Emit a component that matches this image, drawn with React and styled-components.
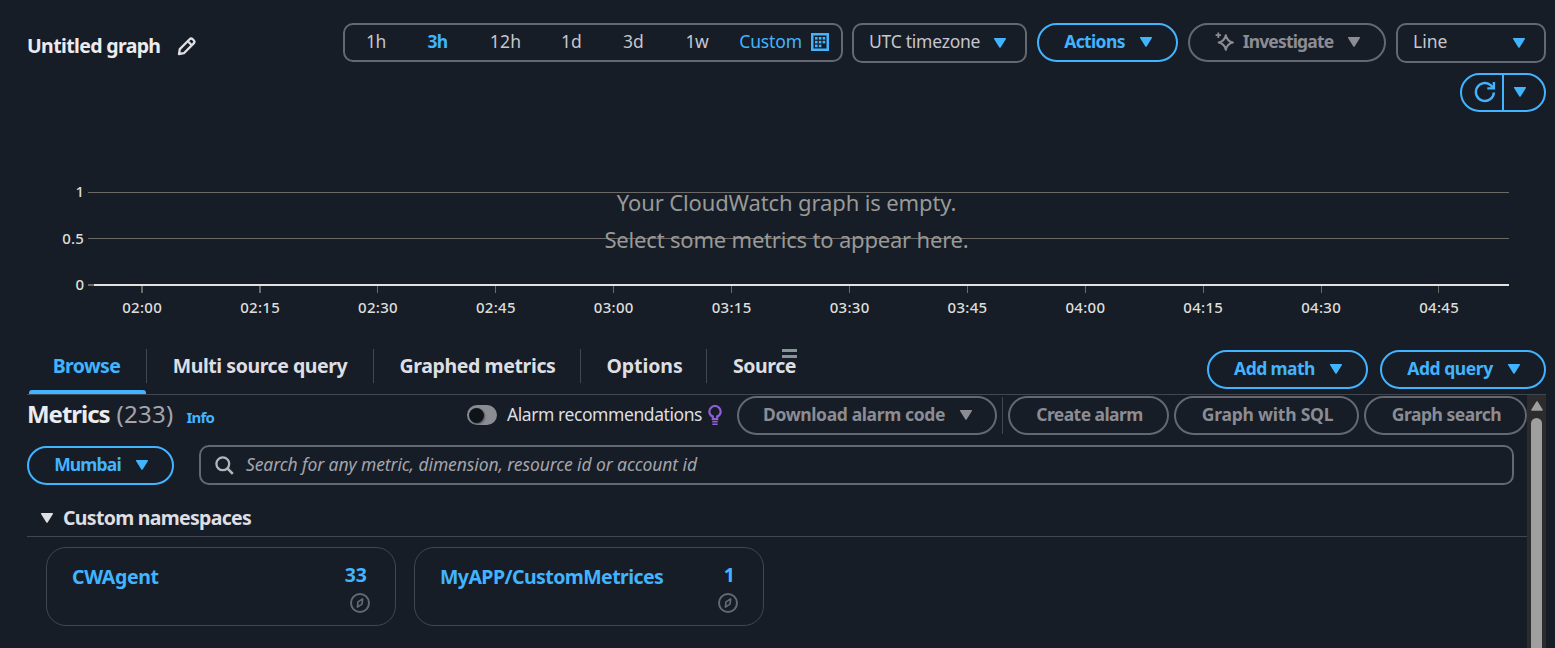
import React from 'react';
import styled, { createGlobalStyle } from 'styled-components';

const c = {
  bg: '#161d26',
  blue: '#42b4ff',
  line: '#656871',
  divider: '#424650',
  disabled: '#8c8c94',
  text: '#c6c6cd',
  heading: '#ebebf0',
  tab: '#dedee3',
};

const GlobalStyle = createGlobalStyle`
  * { box-sizing: border-box; }
  body { margin: 0; background: ${c.bg}; overflow: hidden; }
  button { font: inherit; background: none; border: 0; padding: 0; margin: 0; }
`;

const Page = styled.div`
  height: 648px;
  display: flex;
  flex-direction: column;
  overflow: hidden;
  background: ${c.bg};
  color: ${c.text};
  font-family: 'Noto Sans', 'Open Sans', sans-serif;
  font-size: 17.5px;
  line-height: 24px;
  white-space: nowrap;
`;

const Label = styled.span`
  display: block;
  letter-spacing: ${(p) => p.$ls || 0}px;
`;

/* Header */
const Header = styled.header`
  display: flex;
  justify-content: space-between;
  height: 112px;
  padding: 23px 9px 0 27px;
`;

const Title = styled.h1`
  display: flex;
  align-items: center;
  gap: 17px;
  height: 46px;
  margin: 0;
  color: ${c.heading};
  font-size: 19.5px;
  font-weight: 700;
`;

const Toolbar = styled.div`
  display: flex;
  flex-direction: column;
  align-items: flex-end;
  gap: 10px;
`;

const ToolbarRow = styled.div`
  display: flex;
  gap: 10px;
  height: 40px;
`;

const Ranges = styled.div`
  display: flex;
  align-items: center;
  width: 500px;
  height: 39px;
  margin-right: -1px;
  padding: 0 12px 2px 0;
  border: 2px solid ${c.line};
  border-radius: 10px;
  ${Label} { padding-bottom: 2px; }
`;

const Range = styled.button`
  width: ${(p) => p.$w}px;
  color: ${(p) => (p.$active ? c.blue : c.text)};
  font-weight: ${(p) => (p.$active ? 700 : 400)};
`;

const CustomRange = styled.button`
  display: flex;
  align-items: center;
  gap: 9px;
  margin-left: auto;
  color: ${c.blue};
`;

const Select = styled.button`
  display: flex;
  align-items: center;
  justify-content: space-between;
  width: ${(p) => p.$w}px;
  height: 40px;
  padding: 0 18px 1px 15px;
  color: ${c.text};
  border: 2px solid ${c.line};
  border-radius: 10px;
  ${Label} { padding-bottom: 3px; }
`;

const PillButton = styled.button`
  display: flex;
  align-items: center;
  justify-content: center;
  gap: 14px;
  flex: none;
  width: ${(p) => p.$w}px;
  height: 39px;
  padding: 0 0 2px 2px;
  color: ${(p) => (p.$disabled ? c.disabled : c.blue)};
  border: 2px solid ${(p) => (p.$disabled ? c.line : c.blue)};
  border-radius: 20px;
  font-weight: 700;
  ${Label} { padding-bottom: 2px; }
`;

const SplitButton = styled.div`
  display: flex;
  width: 86px;
  height: 39px;
  color: ${c.blue};
  border: 2px solid ${c.blue};
  border-radius: 20px;
`;

const SplitPart = styled.button`
  display: flex;
  align-items: center;
  justify-content: center;
  width: ${(p) => p.$w}px;
  padding: ${(p) => p.$pad};
  color: inherit;
  & + & { border-left: 2px solid ${c.blue}; }
`;

/* Chart */
const Chart = styled.svg`
  display: block;
  flex: none;
  width: 1555px;
  height: 237px;
`;

/* Tabs */
const TabBar = styled.nav`
  display: flex;
  justify-content: space-between;
  flex: none;
  height: 46px;
  margin: 0 9px 0 27px;
  border-bottom: 1px solid ${c.divider};
`;

const Tabs = styled.div`
  display: flex;
`;

const Tab = styled.button`
  position: relative;
  display: flex;
  align-items: flex-start;
  justify-content: center;
  width: ${(p) => p.$w}px;
  height: 34px;
  padding: 5px 0 0 ${(p) => p.$nudge || 0}px;
  color: ${(p) => (p.$active ? c.blue : c.tab)};
  border-right: ${(p) => (p.$last ? 0 : 1)}px solid ${c.divider};
  font-size: 19.5px;
  font-weight: 700;
`;

const ActiveBar = styled.span`
  position: absolute;
  left: 2px;
  right: 0;
  top: 41px;
  height: 4px;
  background: ${c.blue};
  border-radius: 3px 3px 0 0;
`;

const DragHandle = styled.span`
  position: absolute;
  left: 75px;
  top: 0;
  width: 15px;
  height: 9px;
  border: solid #879596;
  border-width: 3px 0;
`;

const TabActions = styled.div`
  display: flex;
  gap: 12px;
  padding-top: 1px;
`;

/* Metrics panel */
const Panel = styled.section`
  display: flex;
  justify-content: space-between;
  flex: 1;
  min-height: 0;
  margin: 0 9px 0 27px;
`;

const PanelBody = styled.div`
  flex: 1;
`;

const PanelHeader = styled.div`
  display: flex;
  justify-content: space-between;
  height: 40px;
  padding-top: 1px;
`;

const PanelTitle = styled.h2`
  display: flex;
  align-items: baseline;
  margin: 0;
  color: ${c.heading};
  font-size: 24px;
  line-height: 36px;
`;

const Count = styled.span`
  margin-left: 7px;
  color: #a4a4ad;
  font-weight: 400;
  letter-spacing: 0.28px;
`;

const Info = styled.span`
  margin-left: 13px;
  color: ${c.blue};
  font-size: 15px;
  letter-spacing: -0.8px;
`;

const PanelActions = styled.div`
  display: flex;
  gap: 5px;
`;

const ToggleField = styled.label`
  display: flex;
  align-items: center;
  height: 38px;
  margin-right: 10px;
  color: ${c.tab};
  ${Label} { padding-bottom: 2px; }
  svg { flex: none; margin-left: 6px; }
`;

const Toggle = styled.span`
  display: flex;
  align-items: center;
  width: 30px;
  height: 20px;
  margin-right: 10px;
  padding-left: 2px;
  background: ${c.disabled};
  border-radius: 10px;
`;

const Knob = styled.span`
  width: 15px;
  height: 15px;
  background: #0f141a;
  border-radius: 50%;
  box-shadow: 1px 1px 2px rgba(15, 20, 26, 0.5);
`;

const Separator = styled.span`
  width: 1px;
  height: 37px;
  margin-top: 1px;
  background: ${c.divider};
`;

const FilterRow = styled.div`
  display: flex;
  gap: 25px;
  height: 40px;
  margin-top: 10px;
  padding-right: 13px;
`;

const RegionSlot = styled.div`
  padding-top: 1px;
`;

const Search = styled.div`
  display: flex;
  align-items: center;
  flex: 1;
  gap: 12px;
  padding: 0 14px;
  color: #a4a4ad;
  border: 2px solid ${c.line};
  border-radius: 10px;
  font-style: italic;
  ${Label} { padding-bottom: 2px; }
`;

const Group = styled.h3`
  display: flex;
  align-items: center;
  gap: 9px;
  height: 38px;
  margin: 14px 0 0;
  padding: 1px 0 0 13px;
  color: ${c.tab};
  border-bottom: 1px solid ${c.divider};
  font-size: 19.5px;
`;

const Cards = styled.div`
  display: flex;
  gap: 18px;
  padding: 10px 0 0 19px;
`;

const Card = styled.article`
  display: flex;
  justify-content: space-between;
  width: 350px;
  height: 79px;
  padding: 17px 26px 0 25px;
  color: ${c.blue};
  border: 1px solid ${c.divider};
  border-radius: 20px;
  font-size: 19.5px;
  font-weight: 700;
`;

const CardName = styled.span`
  display: block;
  letter-spacing: ${(p) => p.$ls}px;
`;

const CardSide = styled.div`
  display: flex;
  flex-direction: column;
  align-items: flex-end;
  gap: 6px;
  margin-top: -2px;
  padding-right: 2px;
  svg { margin-right: -2.5px; }
`;

const Scrollbar = styled.div`
  display: flex;
  flex-direction: column;
  align-items: center;
  width: 19px;
  padding-top: 5px;
  background: #2c2c2c;
`;

const Thumb = styled.div`
  flex: 1;
  width: 11px;
  margin-top: 6px;
  background: #9f9f9f;
  border-radius: 6px 6px 0 0;
`;

/* Icons */
const IconSvg = styled.svg`
  display: block;
  flex: none;
`;

const Caret = ({ color = 'currentColor', up }) => (
  <IconSvg width="14" height="12" viewBox="0 0 14 12">
    <path
      d={up ? 'M2 10 7 2l5 8z' : 'M1.7 1.7h10.6L7 10z'}
      fill={color}
      stroke={color}
      strokeWidth="1.5"
      strokeLinejoin="round"
    />
  </IconSvg>
);

const Pencil = () => (
  <IconSvg width="20" height="20" viewBox="0 0 20 20" fill="none" stroke="#dedee3" strokeWidth="2.3" strokeLinejoin="round">
    <path d="M2 18l.8-4.9L12.6 3.3a2.2 2.2 0 0 1 3.1 0l1 1a2.2 2.2 0 0 1 0 3.1L6.9 17.2z" />
    <path d="M10.8 5.2l4 4" />
  </IconSvg>
);

const Calendar = () => (
  <IconSvg width="18" height="18" viewBox="0 0 18 18">
    <path d="M1.25 1.25h15.5v15.5H1.25z" fill="none" stroke={c.blue} strokeWidth="2.5" />
    <g fill={c.blue}>
      {[4, 7.8, 11.6].flatMap((y, row) =>
        [4, 7.8, 11.6].map((x, col) =>
          row === 2 && col === 2 ? null : <rect key={`${x}-${y}`} x={x} y={y} width="2.6" height="2.6" />
        )
      )}
    </g>
  </IconSvg>
);

const SparkleSvg = styled(IconSvg)`
  margin-right: -6px;
`;

const Sparkle = () => (
  <SparkleSvg width="20" height="20" viewBox="0 0 20 20" fill="none" stroke={c.disabled} strokeWidth="2.1" strokeLinejoin="round">
    <path d="M10.8 3.2c.9 4.4 2.700 6.300 7.100 7.300-4.400 1-6.200 2.900-7.100 7.300-.9-4.400-2.700-6.300-7.100-7.300 4.400-1 6.200-2.900 7.100-7.300z" />
    <path d="M3.300.5v5.400M.6 3.200H6" strokeWidth="1.800" />
  </SparkleSvg>
);

const Refresh = () => (
  <IconSvg width="22" height="22" viewBox="0 0 22 22" fill="none" stroke={c.blue} strokeWidth="2.4">
    <path d="M19.900 11.500a9 9 0 1 1-3-7.200l3 3" />
    <path d="M19.900 1v6.400h-6.600" />
  </IconSvg>
);

const Bulb = () => (
  <IconSvg width="14" height="20" viewBox="0 0 14 20" fill="none" stroke="#8f5fd8" strokeWidth="2.200">
    <path d="M4.800 14.200v-2.600A5.600 5.600 0 0 1 1.300 6.700a5.700 5.700 0 0 1 11.400 0 5.600 5.600 0 0 1-3.500 4.900v2.600z" />
    <path d="M4.300 16.800h5.400M4.300 19.200h5.400" strokeWidth="1.600" />
  </IconSvg>
);

const Magnifier = () => (
  <IconSvg width="19" height="19" viewBox="0 0 19 19" fill="none" stroke="#b4b4bb" strokeWidth="2.300">
    <circle cx="7.800" cy="7.800" r="6.400" />
    <path d="M12.400 12.400l5.400 5.400" strokeWidth="2.600" />
  </IconSvg>
);

const Compass = () => (
  <IconSvg width="20" height="20" viewBox="0 0 20 20" fill="none" stroke={c.line} strokeWidth="2">
    <circle cx="10" cy="10" r="9" />
    <path d="M12.600 5.900l-.6 5.200-4.600 3 .6-5.200z" strokeWidth="1.700" strokeLinejoin="round" />
  </IconSvg>
);

const times = ['02:00', '02:15', '02:30', '02:45', '03:00', '03:15', '03:30', '03:45', '04:00', '04:15', '04:30', '04:45'];
const yAxis = [['1', 80, 0], ['0.5', 127, 0.2], ['0', 173, 0]];

const EmptyChart = () => (
  <Chart viewBox="0 0 1555 237">
    <g fill="#6b6a67" shapeRendering="crispEdges">
      <rect x="88" y="80" width="1421" height="1" />
      <rect x="88" y="126" width="1421" height="1" />
      <rect x="88" y="172" width="6" height="2" />
      {times.map((t, i) => (
        <rect key={t} x={Math.round(141 + i * 117.95)} y="174" width={i < 2 ? 2 : 1} height="7" />
      ))}
    </g>
    <rect x="94" y="172" width="1415" height="2" fill="#e4e2df" />
    <g fill="#dedddb" fontSize="15" fontWeight="500">
      {yAxis.map(([t, y, ls]) => (
        <text key={t} x="84" y={y + 5} textAnchor="end" letterSpacing={ls}>{t}</text>
      ))}
      {times.map((t, i) => (
        <text key={t} x={142.200 + i * 117.900} y="201" textAnchor="middle" letterSpacing="0.3">{t}</text>
      ))}
    </g>
    <g fill="#999997" fontSize="22" textAnchor="middle">
      <text x="786.500" y="99" letterSpacing="-0.12">Your CloudWatch graph is empty.</text>
      <text x="786.500" y="136" letterSpacing="-0.19">Select some metrics to appear here.</text>
    </g>
  </Chart>
);

const ranges = [
  { label: '1h', w: 62, ls: -0.3 },
  { label: '3h', w: 61, ls: -0.8, active: true },
  { label: '12h', w: 75, ls: 0.14 },
  { label: '1d', w: 57, ls: 0 },
  { label: '3d', w: 67, ls: 0 },
  { label: '1w', w: 60, ls: -0.5 },
];

const tabs = [
  { label: 'Browse', w: 120, ls: -0.61, active: true },
  { label: 'Multi source query', w: 227, ls: -0.45 },
  { label: 'Graphed metrics', w: 207, ls: -0.38, nudge: 1 },
  { label: 'Options', w: 126, ls: -0.07, nudge: 2 },
  { label: 'Source', w: 115, ls: -0.4, last: true },
];

const namespaces = [
  { name: 'CWAgent', ls: -0.37, count: 33 },
  { name: 'MyAPP/CustomMetrices', ls: -0.56, count: 1 },
];

export default function App() {
  return (
    <Page>
      <GlobalStyle />
      <Header>
        <Title>
          <Label $ls={-0.64}>Untitled graph</Label>
          <Pencil />
        </Title>
        <Toolbar>
          <ToolbarRow>
            <Ranges>
              {ranges.map((r) => (
                <Range key={r.label} $w={r.w} $active={r.active}>
                  <Label $ls={r.ls}>{r.label}</Label>
                </Range>
              ))}
              <CustomRange>
                <Label $ls={-0.13}>Custom</Label>
                <Calendar />
              </CustomRange>
            </Ranges>
            <Select $w={175}>
              <Label $ls={-0.25}>UTC timezone</Label>
              <Caret color={c.blue} />
            </Select>
            <PillButton $w={141}>
              <Label $ls={-0.63}>Actions</Label>
              <Caret />
            </PillButton>
            <PillButton $w={198} $disabled>
              <Sparkle />
              <Label $ls={-0.84}>Investigate</Label>
              <Caret />
            </PillButton>
            <Select $w={150}>
              <Label>Line</Label>
              <Caret color={c.blue} />
            </Select>
          </ToolbarRow>
          <SplitButton>
            <SplitPart $w={40} $pad="0 0 2px 5px"><Refresh /></SplitPart>
            <SplitPart $w={42} $pad="0 8px 2px 0"><Caret /></SplitPart>
          </SplitButton>
        </Toolbar>
      </Header>

      <EmptyChart />

      <TabBar>
        <Tabs>
          {tabs.map((t) => (
            <Tab key={t.label} $w={t.w} $nudge={t.nudge} $active={t.active} $last={t.last}>
              <Label $ls={t.ls}>{t.label}</Label>
              {t.active && <ActiveBar />}
              {t.last && <DragHandle />}
            </Tab>
          ))}
        </Tabs>
        <TabActions>
          <PillButton $w={161}>
            <Label $ls={-0.56}>Add math</Label>
            <Caret />
          </PillButton>
          <PillButton $w={166}>
            <Label $ls={-0.44}>Add query</Label>
            <Caret />
          </PillButton>
        </TabActions>
      </TabBar>

      <Panel>
        <PanelBody>
          <PanelHeader>
            <PanelTitle>
              <Label $ls={-1.03}>Metrics</Label>
              <Count>(233)</Count>
              <Info>Info</Info>
            </PanelTitle>
            <PanelActions>
              <ToggleField>
                <Toggle><Knob /></Toggle>
                <Label $ls={-0.43}>Alarm recommendations</Label>
                <Bulb />
              </ToggleField>
              <PillButton $w={260} $disabled>
                <Label $ls={-0.37}>Download alarm code</Label>
                <Caret />
              </PillButton>
              <Separator />
              <PillButton $w={161} $disabled><Label $ls={-0.57}>Create alarm</Label></PillButton>
              <PillButton $w={185} $disabled><Label $ls={-0.22}>Graph with SQL</Label></PillButton>
              <PillButton $w={163} $disabled><Label $ls={-0.48}>Graph search</Label></PillButton>
            </PanelActions>
          </PanelHeader>

          <FilterRow>
            <RegionSlot>
              <PillButton $w={147}>
                <Label $ls={-0.84}>Mumbai</Label>
                <Caret />
              </PillButton>
            </RegionSlot>
            <Search>
              <Magnifier />
              <Label $ls={-0.1}>Search for any metric, dimension, resource id or account id</Label>
            </Search>
          </FilterRow>

          <Group>
            <Caret />
            <Label $ls={-0.7}>Custom namespaces</Label>
          </Group>

          <Cards>
            {namespaces.map((n) => (
              <Card key={n.name}>
                <CardName $ls={n.ls}>{n.name}</CardName>
                <CardSide>
                  <span>{n.count}</span>
                  <Compass />
                </CardSide>
              </Card>
            ))}
          </Cards>
        </PanelBody>
        <Scrollbar>
          <Caret up color="#9f9f9f" />
          <Thumb />
        </Scrollbar>
      </Panel>
    </Page>
  );
}
